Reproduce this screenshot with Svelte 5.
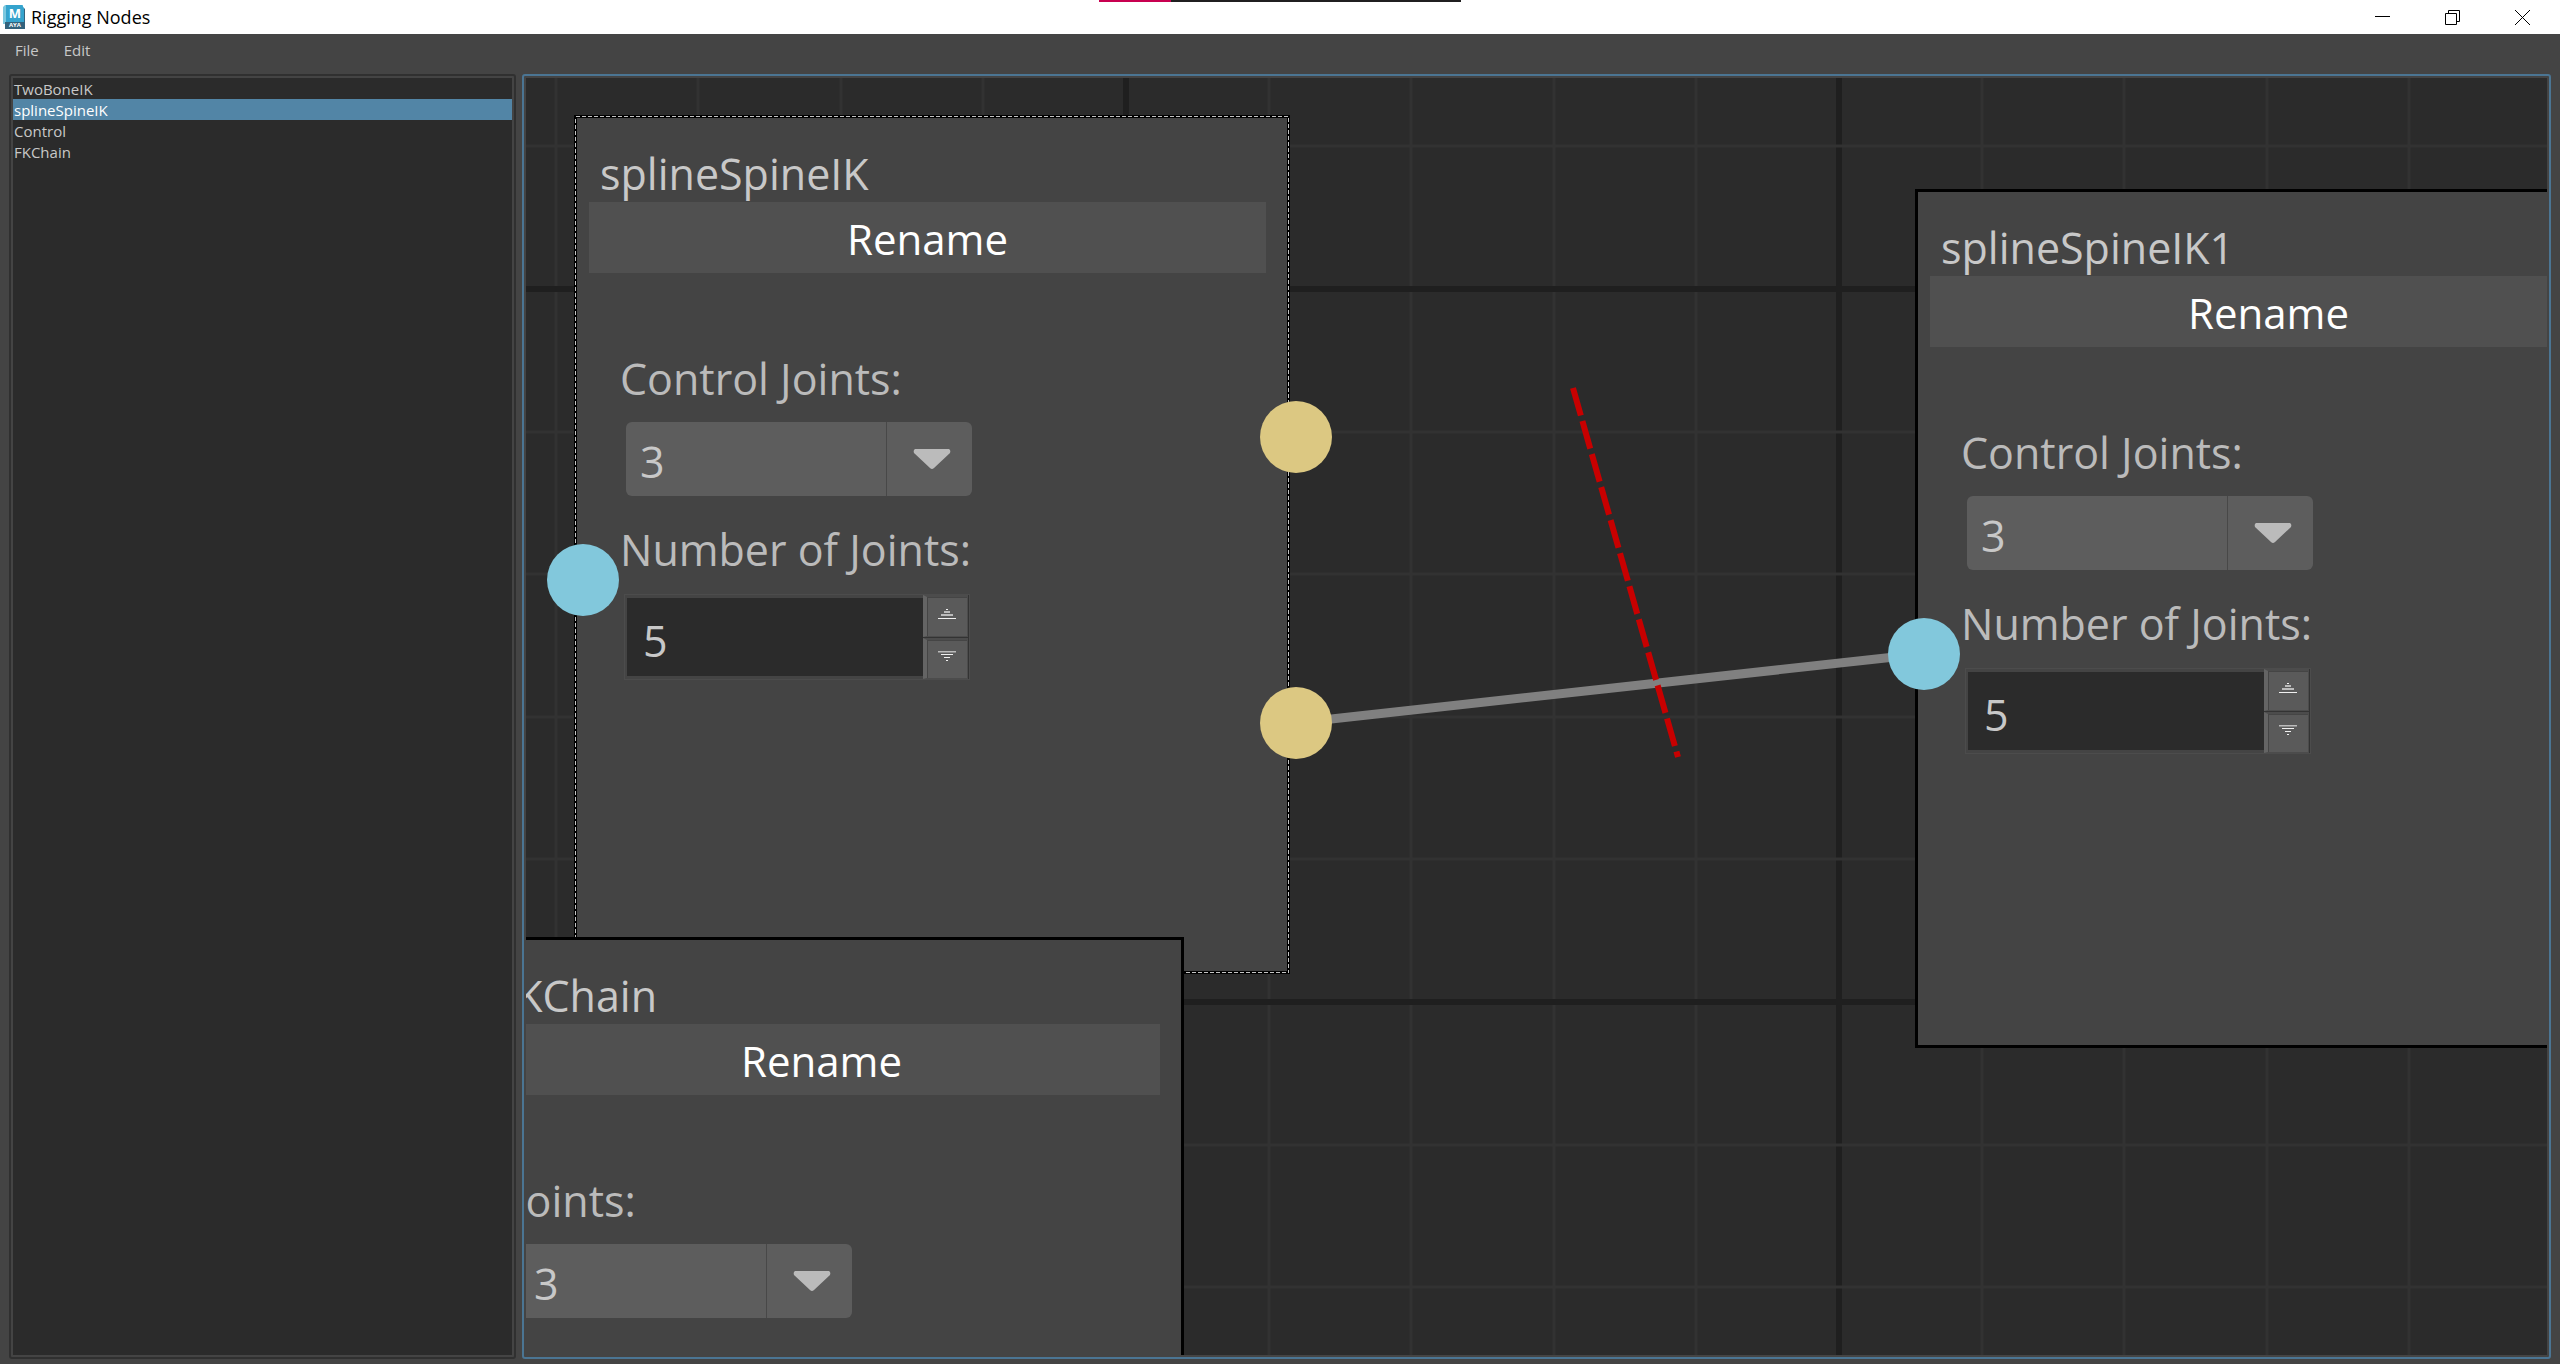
<script>
  const items = ['TwoBoneIK', 'splineSpineIK', 'Control', 'FKChain'];
  let selected = $state('splineSpineIK');

  const steps = Array.from({ length: 24 }, (_, i) => i - 4);
  const gridLines = (origin) =>
    steps.map((n) => ({ at: Math.round(origin + (713 * n) / 5), major: n % 5 === 0 }));
  const columns = gridLines(600).sort((a, b) => a.major - b.major);
  const rows = gridLines(211).sort((a, b) => a.major - b.major);

  const nodes = [
    {
      id: 'spine', title: 'splineSpineIK', x: 48, y: 37, selected: true,
      comboLabel: 'Control Joints:', combo: 3, count: 5, inputs: [465], outputs: [322, 608]
    },
    {
      id: 'spine1', title: 'splineSpineIK1', x: 1389, y: 111,
      comboLabel: 'Control Joints:', combo: 3, count: 5, inputs: [465], outputs: [322, 608]
    },
    {
      id: 'chain', title: 'FKChain', x: -58, y: 859, narrow: true,
      comboLabel: 'Joints:', combo: 3, inputs: [], outputs: []
    }
  ];
</script>

<div class="window">
  <header class="titlebar">
    <svg class="logo" width="24" height="26" viewBox="0 0 24 26" aria-hidden="true">
      <path d="M2 1h18v19H0V3z" fill="#7cc8df" />
      <path d="M3 1h16l2 3v16H3z" fill="#35a3cd" />
      <path d="M21 4l1 1v20H2v-2h19z" fill="#33627c" />
      <path d="M2 18h20v7H2z" fill="#33627c" />
      <text x="12" y="14" class="logo-m">M</text>
      <text x="12" y="23" class="logo-aya">AYA</text>
    </svg>
    <h1>Rigging Nodes</h1>
    <div class="progress"><span></span></div>
    <div class="controls">
      <button aria-label="Minimize">
        <svg width="15" height="15" viewBox="0 0 15 15"><path d="M0 6.5h15" /></svg>
      </button>
      <button aria-label="Restore">
        <svg width="15" height="15" viewBox="0 0 15 15"><path d="M.5 3.500h11v11H.5zM3.500 3.500v-3h11v11h-3" /></svg>
      </button>
      <button aria-label="Close">
        <svg width="15" height="15" viewBox="0 0 15 15"><path d="M0 0l15 15M15 0L0 15" /></svg>
      </button>
    </div>
  </header>

  <nav class="menubar">
    <button>File</button>
    <button>Edit</button>
  </nav>

  <main>
    <aside class="panel">
      <ul>
        {#each items as item}
          <li>
            <button class:active={item === selected} onclick={() => (selected = item)}>{item}</button>
          </li>
        {/each}
      </ul>
    </aside>

    <section class="panel view">
      <div class="canvas">
        <svg class="layer" aria-hidden="true">
          {#each columns as c}
            <line x1={c.at} x2={c.at} y1="0" y2="100%" class:major={c.major} />
          {/each}
          {#each rows as r}
            <line x1="0" x2="100%" y1={r.at} y2={r.at} class:major={r.major} />
          {/each}
          <path class="wire" d="M769 645L1396 576" />
        </svg>

        {#each nodes as node}
          <article
            class="node"
            class:narrow={node.narrow}
            style:left="{node.x}px"
            style:top="{node.y}px"
          >
            {#if node.selected}
              <svg class="outline" aria-hidden="true"><rect x=".5" y=".5" /></svg>
            {/if}
            <h2>{node.title}</h2>
            <button class="rename">Rename</button>
            <div class="fields">
              <label for="{node.id}-combo">{node.comboLabel}</label>
              <div class="combo">
                <select id="{node.id}-combo" value={node.combo}>
                  <option value={node.combo}>{node.combo}</option>
                </select>
                <svg class="arrow" width="54" height="20" viewBox="0 0 54 20" aria-hidden="true">
                  <path d="M10 0h34q2 1 1 4L29 19q-2 2-4 0L9 4q-1-3 1-4z" />
                </svg>
              </div>
              {#if node.count}
                <label for="{node.id}-count">Number of Joints:</label>
                <div class="spin">
                  <input id="{node.id}-count" type="number" value={node.count} />
                  <div class="steppers">
                    <button aria-label="Increase">
                      <svg width="20" height="10" viewBox="0 0 20 10">
                        <path d="M9 .5h2" />
                        <path d="M7 3h6" class="soft" />
                        <path d="M4 6h12" class="soft" />
                        <path d="M1 9.500h18" />
                      </svg>
                    </button>
                    <button aria-label="Decrease">
                      <svg width="20" height="10" viewBox="0 0 20 10">
                        <path d="M1 .5h18" class="soft" />
                        <path d="M4 3.500h12M7 6.500h6M9 9.500h2" />
                      </svg>
                    </button>
                  </div>
                </div>
              {/if}
            </div>
            {#each node.inputs as y}<span class="port in" style:top="{y}px"></span>{/each}
            {#each node.outputs as y}<span class="port out" style:top="{y}px"></span>{/each}
          </article>
        {/each}

        <svg class="layer" aria-hidden="true">
          <path class="cutter" pathLength="67" d="M1047 310L1152 679" />
        </svg>
      </div>
    </section>
  </main>
</div>

<style>
  :global(body) {
    margin: 0;
    background: #444;
  }
  .window {
    min-height: 100vh;
    display: flex;
    flex-direction: column;
    box-sizing: border-box;
    color: #c8c8c8;
    font: 15px/21px 'Open Sans', 'Noto Sans', sans-serif;
  }
  button, select, input {
    font: inherit;
    color: inherit;
    border: 0;
    margin: 0;
    padding: 0;
    background: none;
    border-radius: 0;
    outline: 0;
  }
  h1, h2, ul {
    margin: 0;
    padding: 0;
    font-weight: 400;
    list-style: none;
  }
  .titlebar {
    position: relative;
    display: flex;
    align-items: center;
    height: 34px;
    padding: 0 3px;
    background: #fff;
    color: #000;
  }
  .logo-m, .logo-aya {
    fill: #fff;
    font-weight: 700;
    text-anchor: middle;
  }
  .logo-m { font-size: 13px; }
  .logo-aya { font-size: 6px; }
  h1 {
    padding-left: 4px;
    font-size: 18px;
  }
  .progress {
    position: absolute;
    top: 0;
    left: 1099px;
    width: 362px;
    height: 2px;
    background: #201f20;
  }
  .progress span {
    display: block;
    width: 20%;
    height: 100%;
    background: #c80050;
  }
  .controls {
    display: flex;
    margin-left: auto;
  }
  .controls button {
    width: 70px;
    height: 34px;
    display: grid;
    place-items: center;
  }
  .controls svg {
    fill: none;
    stroke: #000;
  }
  .menubar {
    display: flex;
    gap: 25px;
    height: 40px;
    padding: 0 15px;
    box-sizing: border-box;
  }
  .menubar button { height: 32px; }
  main {
    flex: 1;
    display: flex;
    gap: 6px;
    padding: 0 9px 5px;
  }
  .panel {
    box-sizing: border-box;
    width: 507px;
    flex: none;
    display: flex;
    padding: 2px;
    border: 2px solid #303030;
    border-radius: 3px;
  }
  .panel ul {
    flex: 1;
    background: #2b2b2b;
  }
  .panel li button {
    display: block;
    box-sizing: border-box;
    width: 100%;
    height: 21px;
    padding: 1px 0 0 1px;
    text-align: left;
    line-height: 20px;
  }
  .panel li .active {
    background: #5285a6;
    color: #fff;
  }
  .view {
    flex: 1;
    width: auto;
    min-width: 0;
    border-color: #4b7593;
  }
  .canvas {
    position: relative;
    flex: 1;
    overflow: hidden;
    background: #2b2b2b;
  }
  .layer {
    position: absolute;
    inset: 0;
    width: 100%;
    height: 100%;
    pointer-events: none;
  }
  .layer line {
    stroke: #323232;
    stroke-width: 3;
  }
  .layer .major {
    stroke: #1f1f1f;
    stroke-width: 6;
  }
  .wire {
    stroke: #808080;
    stroke-width: 9;
  }
  .cutter {
    stroke: #c80000;
    stroke-width: 6;
    stroke-dasharray: 5 1;
  }
  .node {
    position: absolute;
    box-sizing: border-box;
    width: 716px;
    height: 859px;
    padding: 26px 21px 0 12px;
    border: 3px solid #000;
    background: #444;
    font-size: 43px;
    line-height: 60px;
    white-space: nowrap;
  }
  .node h2 {
    height: 58px;
    padding-left: 11px;
    font-size: 43px;
    line-height: 60px;
  }
  .outline {
    position: absolute;
    inset: -2px;
    width: calc(100% + 4px);
    height: calc(100% + 4px);
  }
  .outline rect {
    width: calc(100% - 1px);
    height: calc(100% - 1px);
    fill: none;
    stroke: #c4c4c4;
    stroke-width: 1;
    stroke-dasharray: 4 2;
    shape-rendering: crispEdges;
  }
  .rename {
    position: relative;
    display: block;
    box-sizing: border-box;
    width: 100%;
    height: 71px;
    padding-top: 2px;
    background: #505050;
    color: #fff;
    font-size: 42px;
  }
  .fields {
    display: flex;
    flex-direction: column;
    align-items: flex-start;
    padding: 76px 0 0 31px;
    color: #bbb;
  }
  .combo {
    display: grid;
    align-items: center;
    width: 346px;
    height: 74px;
    margin: 13px 0 24px 6px;
    border-radius: 6px;
    background: linear-gradient(90deg, transparent 260px, #484848 260px, #484848 261px, transparent 261px) #5d5d5d;
  }
  .narrow .combo {
    width: 332px;
    background-position: -14px 0;
  }
  .combo select, .arrow { grid-area: 1 / 1; }
  .combo select {
    width: 100%;
    height: 74px;
    padding: 6px 0 0 14px;
    appearance: none;
    color: #c8c8c8;
  }
  .arrow {
    justify-self: end;
    margin-right: 13px;
    fill: #bbb;
    pointer-events: none;
  }
  .spin {
    display: flex;
    box-sizing: border-box;
    width: 346px;
    height: 86px;
    margin: 14px 0 0 4px;
    border: 1px solid #4c4c4c;
  }
  .spin input {
    flex: 1;
    min-width: 0;
    margin: 3px 0 3px 2px;
    padding: 8px 0 0 16px;
    background: #2b2b2b;
    color: #c8c8c8;
    appearance: textfield;
  }
  .spin input::-webkit-inner-spin-button { appearance: none; }
  .steppers {
    display: grid;
    width: 46px;
    gap: 1px;
    padding-right: 1px;
    box-sizing: border-box;
    background: #333;
  }
  .steppers button {
    display: grid;
    place-items: center;
    padding-bottom: 5px;
    border: solid #4c4c4c;
    border-width: 2px 1px 1px 4px;
    border-left-color: #646464;
    background: #5a5a5a;
    box-shadow: inset 1px 1px #454545;
  }
  .steppers svg {
    stroke: #f0f0f0;
  }
  .steppers .soft {
    stroke: #bbb;
    stroke-width: 2;
  }
  .port {
    position: absolute;
    width: 72px;
    height: 72px;
    margin: -39px;
    border-radius: 50%;
  }
  .in {
    left: 9px;
    background: #82c8dc;
  }
  .out {
    left: 722px;
    background: #dcc882;
  }
</style>
